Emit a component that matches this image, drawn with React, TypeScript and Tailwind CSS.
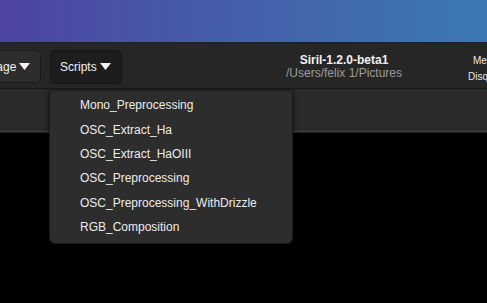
import { ReactNode } from "react";

const scripts = [
  "Mono_Preprocessing",
  "OSC_Extract_Ha",
  "OSC_Extract_HaOIII",
  "OSC_Preprocessing",
  "OSC_Preprocessing_WithDrizzle",
  "RGB_Composition",
];

const Caret = () => (
  <svg width="11" height="7" viewBox="0 0 11 7" className="shrink-0">
    <path d="M0 0 L11 0 L5.5 7 Z" fill="#f2f2f2" />
  </svg>
);

const HeaderButton = ({ children, active, width }: { children: ReactNode; active?: boolean; width: string }) => (
  <div
    className={
      (active
        ? "h-[34px] bg-[#1d1d1d] border-[#141414] "
        : "h-[33px] bg-[#2d2d2d] border-[#1b1b1b] ") +
      width +
      " shrink-0 flex items-center gap-[3px] pl-[9px] rounded-[5px] border text-[#f0f0f0] whitespace-nowrap"
    }
  >
    {children}
  </div>
);

export default function App() {
  return (
    <div
      className="w-[487px] h-[303px] overflow-hidden relative flex flex-col bg-black text-[12px]"
      style={{ fontFamily: '"Liberation Sans", Arial, sans-serif' }}
    >
      {/* desktop strip */}
      <div className="h-[43px] shrink-0 bg-gradient-to-r from-[#4c44a0] via-[#4460aa] to-[#3c78b5] border-b border-[#1a1d2e]" />

      {/* header bar */}
      <div className="h-[46px] shrink-0 bg-[#262626] flex items-center pt-[2px] border-b border-[#181818]">
        <div className="-ml-[27px] shrink-0">
          <HeaderButton width="w-[68px]">
            <span>Image</span>
            <Caret />
          </HeaderButton>
        </div>
        <div className="ml-[9px] shrink-0">
          <HeaderButton active width="w-[72px]">
            <span>Scripts</span>
            <Caret />
          </HeaderButton>
        </div>
        <div className="ml-[150px] w-[144px] shrink-0 flex flex-col items-center leading-[13px] mt-[1px] whitespace-nowrap">
          <span className="font-bold text-[#f2f2f2]">Siril-1.2.0-beta1</span>
          <span className="text-[#9b9b9b]">/Users/felix 1/Pictures</span>
        </div>
        <div className="ml-[52px] shrink-0 flex flex-col text-[10px] leading-[16px] text-[#e8e8e8] whitespace-nowrap mt-[4px]">
          <span className="ml-[5px]">Mem: 245 MiB</span>
          <span>Disque: 112 GiB</span>
        </div>
      </div>

      {/* toolbar row */}
      <div className="h-[40px] shrink-0 bg-[#2b2b2b]" />
      <div className="h-[1px] shrink-0 bg-[#202020]" />
      <div className="h-[2px] shrink-0 bg-[#383838]" />
      <div className="h-[1px] shrink-0 bg-[#222222]" />
      <div className="flex-1 bg-black" />

      {/* scripts menu */}
      <div className="absolute left-[49px] top-[90px] w-[244px] bg-[#2d2d2d] border border-[#1a1a1a] rounded-b-[6px] shadow-[0_2px_6px_rgba(0,0,0,0.6)] pt-[2px] pb-[4px] flex flex-col">
        {scripts.map((s) => (
          <div key={s} className="h-[24.4px] flex items-center pl-[30px] text-[#ececec] whitespace-nowrap">
            {s}
          </div>
        ))}
      </div>
    </div>
  );
}
